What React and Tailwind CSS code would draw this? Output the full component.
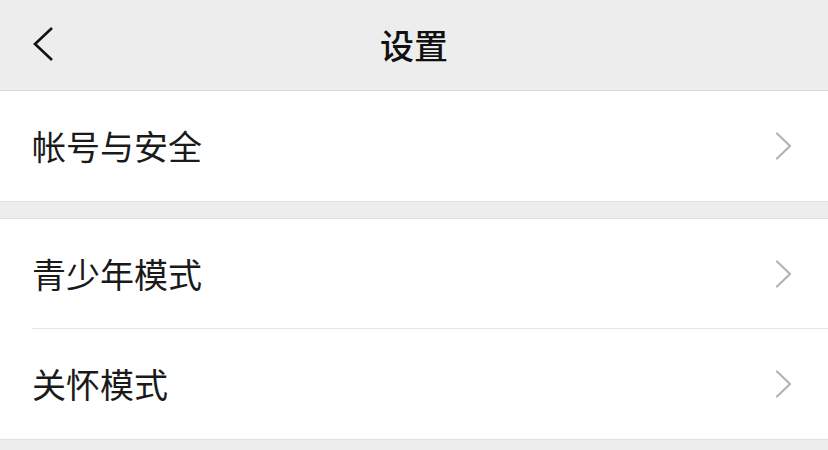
import React from "react";

const font = { fontFamily: '"Noto Sans CJK SC", "Noto Sans", sans-serif' };

function Chevron() {
  return (
    <svg width="18" height="28" viewBox="0 0 18 28" className="shrink-0">
      <path d="M2 1.5 L15 14 L2 26.5" fill="none" stroke="#b3b3b3" strokeWidth="2.2" strokeLinecap="round" strokeLinejoin="round" />
    </svg>
  );
}

function Row({ label, divider }) {
  return (
    <div className="relative flex h-[110px] items-center justify-between bg-white pl-[32px] pr-[35px]">
      <span className="text-[34px] leading-none text-[#1a1a1a]">{label}</span>
      <Chevron />
      {divider && <div className="absolute bottom-0 left-[32px] right-0 h-px bg-[#e5e5e5]" />}
    </div>
  );
}

export default function App() {
  return (
    <div className="h-[450px] w-[828px] overflow-hidden bg-[#ededed]" style={font}>
      <div className="relative flex h-[91px] items-center justify-center border-b border-[#dadada] bg-[#ededed]">
        <svg width="24" height="36" viewBox="0 0 24 36" className="absolute left-[31px] top-[26px]">
          <path d="M21 2 L4 18 L21 34" fill="none" stroke="#111" strokeWidth="2.6" strokeLinejoin="miter" />
        </svg>
        <span className="text-[34px] font-medium leading-none text-[#111]">设置</span>
      </div>
      <div className="border-b border-[#e0e0e0]">
        <Row label="帐号与安全" />
      </div>
      <div className="h-[16px]" />
      <div className="border-y border-[#e0e0e0]">
        <Row label="青少年模式" divider />
        <Row label="关怀模式" />
      </div>
    </div>
  );
}
